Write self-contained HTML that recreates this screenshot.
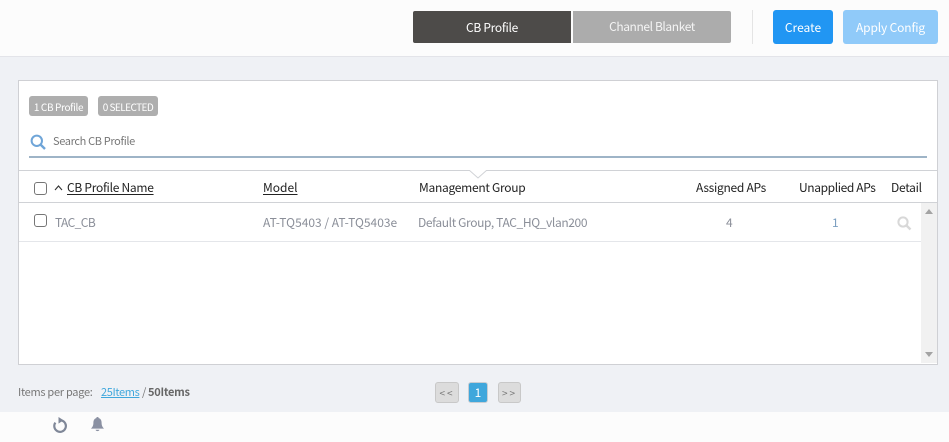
<!DOCTYPE html>
<html><head><meta charset="utf-8"><style>
html,body{margin:0;padding:0}
body{width:949px;height:442px;overflow:hidden;position:relative;background:#eff1f5;font-family:"Noto Sans CJK JP","Liberation Sans",sans-serif;font-size:12px;color:#333}
.a{position:absolute;white-space:nowrap}
.c{display:flex;align-items:center;justify-content:center}
.cb{width:11px;height:11px;border:1px solid #767676;border-radius:3px;background:#fff}
.h{top:180px;line-height:16px;color:#222;letter-spacing:-.28px}
.h u{text-underline-offset:2px}
.d{top:215px;line-height:16px;color:#8b8f99}
</style></head><body>
<div class="a" style="left:0;top:0;width:949px;height:56px;background:#fcfcfc;border-bottom:1px solid #e3e4e9"></div>
<div class="a c" style="left:413px;top:11px;width:158px;height:32px;background:#4d4b49;color:#fff;border-radius:2px 0 0 2px;letter-spacing:-.3px">CB Profile</div>
<div class="a c" style="left:573px;top:11px;width:158px;height:32px;background:#acacac;color:#f4f4f4;border-radius:0 2px 2px 0;padding-bottom:1px;box-sizing:border-box;letter-spacing:-.4px">Channel Blanket</div>
<div class="a" style="left:752px;top:10px;width:1px;height:34px;background:#e4e4e4"></div>
<div class="a c" style="left:773px;top:10px;width:60px;height:34px;background:#2196f3;color:#fff;border-radius:3px">Create</div>
<div class="a c" style="left:843px;top:10px;width:95px;height:34px;background:#90caf9;color:#fff;border-radius:3px;letter-spacing:-.15px">Apply Config</div>

<div class="a" style="left:18px;top:80px;width:918px;height:283px;background:#fff;border:1px solid #cfd0d4"></div>
<div class="a c" style="left:29px;top:96px;width:59px;height:20px;background:#aeaeae;color:#fff;border-radius:3px;font-size:10px;letter-spacing:-.35px">1 CB Profile</div>
<div class="a c" style="left:98px;top:96px;width:60px;height:20px;background:#aeaeae;color:#fff;border-radius:3px;font-size:10px;letter-spacing:-.55px">0 SELECTED</div>
<svg class="a" style="left:30px;top:134px" width="16" height="16" viewBox="0 0 16 16"><circle cx="6.8" cy="6.8" r="5.2" fill="none" stroke="#6fa5d8" stroke-width="2"/><path d="M10.6 10.6L15 15" stroke="#6fa5d8" stroke-width="2.4"/></svg>
<div class="a" style="left:53px;top:133px;line-height:16px;font-size:11px;color:#777;letter-spacing:-.35px">Search CB Profile</div>
<div class="a" style="left:29px;top:156px;width:898px;height:2px;background:#9eb4c7"></div>

<div class="a" style="left:19px;top:170px;width:918px;height:1px;background:#d0d2d6"></div>
<svg class="a" style="left:469px;top:170px" width="18" height="9" viewBox="0 0 18 9"><path d="M0 0L9 8L18 0" fill="#fff" stroke="#d0d2d6"/></svg>
<div class="a" style="left:19px;top:202px;width:918px;height:1px;background:#d0d2d6"></div>
<div class="a cb" style="left:34px;top:182px"></div>
<svg class="a" style="left:54px;top:184px" width="9" height="7" viewBox="0 0 9 7"><path d="M1 6L4.5 2L8 6" fill="none" stroke="#333" stroke-width="1.1"/></svg>
<div class="a h" style="left:67px"><u>CB Profile Name</u></div>
<div class="a h" style="left:263px;letter-spacing:0"><u>Model</u></div>
<div class="a h" style="left:419px">Management Group</div>
<div class="a h" style="left:696px">Assigned APs</div>
<div class="a h" style="left:799px;letter-spacing:-.38px">Unapplied APs</div>
<div class="a h" style="left:891px">Detail</div>

<div class="a cb" style="left:34px;top:214px"></div>
<div class="a d" style="left:55px;letter-spacing:-.6px">TAC_CB</div>
<div class="a d" style="left:263px">AT-TQ5403 / AT-TQ5403e</div>
<div class="a d" style="left:418px;letter-spacing:-.38px">Default Group, TAC_HQ_vlan200</div>
<div class="a d" style="left:726px">4</div>
<div class="a d" style="left:832px;color:#7b9fc0">1</div>
<svg class="a" style="left:897px;top:216px" width="15" height="15" viewBox="0 0 15 15"><circle cx="6" cy="6" r="4.6" fill="none" stroke="#d8d8d8" stroke-width="2"/><path d="M9.5 9.5L13.5 13.5" stroke="#d8d8d8" stroke-width="2.4"/></svg>
<div class="a" style="left:19px;top:241px;width:902px;height:1px;background:#e4e6ea"></div>

<div class="a" style="left:921px;top:203px;width:16px;height:160px;background:#f1f1f1"></div>
<div class="a" style="left:925px;top:209px;width:0;height:0;border-left:4px solid transparent;border-right:4px solid transparent;border-bottom:5px solid #a3a3a3"></div>
<div class="a" style="left:925px;top:352px;width:0;height:0;border-left:4px solid transparent;border-right:4px solid transparent;border-top:5px solid #a3a3a3"></div>

<div class="a" style="left:18px;top:384px;line-height:16px;font-size:11px;color:#777;letter-spacing:-.28px">Items per page:</div>
<div class="a" style="left:101px;top:384px;line-height:16px;font-size:11px;color:#3fa7dc;letter-spacing:-.35px"><u>25Items</u></div>
<div class="a" style="left:142px;top:384px;line-height:16px;font-size:11px;color:#777">/</div>
<div class="a" style="left:148px;top:384px;line-height:16px;font-size:11px;color:#666;font-weight:700;letter-spacing:-.25px">50Items</div>

<div class="a c" style="left:435px;top:382px;width:22px;height:19px;background:#dcdcdc;border:1px solid #c8c8c8;border-radius:3px;font-size:10px;color:#777;letter-spacing:2px">&lt;&lt;</div>
<div class="a c" style="left:468px;top:382px;width:18px;height:19px;background:#3fa7dc;border:1px solid #c8cdd2;border-radius:3px;color:#fff">1</div>
<div class="a c" style="left:498px;top:382px;width:21px;height:19px;background:#dcdcdc;border:1px solid #c8c8c8;border-radius:3px;font-size:10px;color:#777;letter-spacing:2px">&gt;&gt;</div>

<div class="a" style="left:0;top:412px;width:949px;height:30px;background:#fcfcfc"></div>
<svg class="a" style="left:52px;top:416px" width="16" height="18" viewBox="0 0 16 18"><path d="M9.5 4.4A5.8 5.8 0 1 1 3.4 6.6" fill="none" stroke="#7f8798" stroke-width="2.2"/><path d="M6.5 1L11.5 4.2L6.5 7.6Z" fill="#7f8798"/></svg>
<svg class="a" style="left:90px;top:416px" width="15" height="17" viewBox="0 0 15 17"><path d="M7.5 1C8.5 1 8.7 1.6 8.7 2.1C10.8 2.7 11.6 4.6 11.6 6.8C11.6 9.8 12.6 11.2 14 12.6H1C2.4 11.2 3.4 9.8 3.4 6.8C3.4 4.6 4.2 2.7 6.3 2.1C6.3 1.6 6.5 1 7.5 1Z" fill="#8a90a2"/><path d="M5.6 13.8H9.4C9.2 15.6 5.8 15.6 5.6 13.8Z" fill="#8a90a2"/></svg>
</body></html>
